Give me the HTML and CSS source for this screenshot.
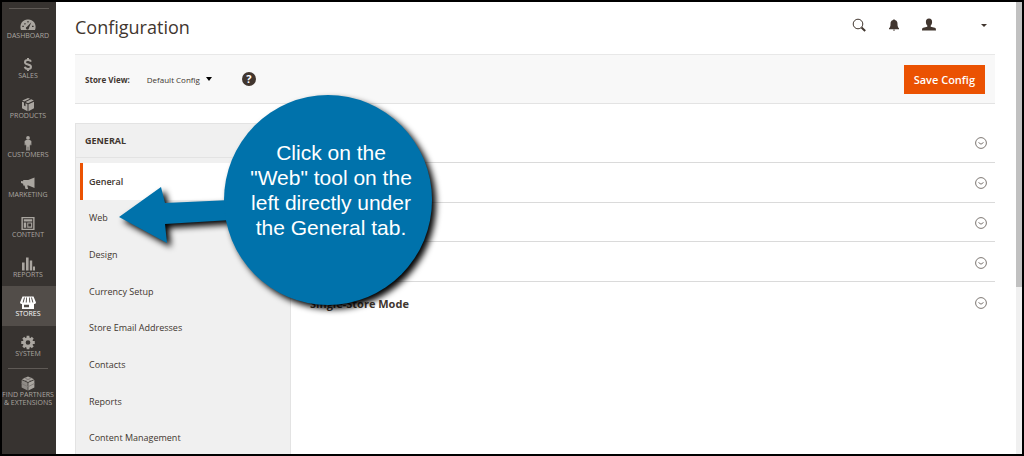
FILE: index.html
```html
<!DOCTYPE html>
<html lang="en">
<head>
    <meta charset="UTF-8">
    <meta name="viewport" content="width=device-width, initial-scale=1.0">
    <title>Configuration</title>
    <link rel="stylesheet" href="styles.css">
</head>
<body>
    <div class="page">
        <nav class="menu">
            <div class="menu-list">
                <a href="#">
                    <svg viewBox="0 0 16 14"><path fill-rule="evenodd" d="M1 12.500A7 7.500 0 0 1 8 2a7 7.500 0 0 1 7 10.500zM2.300 9.500h1.500v-1.200H2.300zM4 6.500l1 .8.900-1-1-.8zM7.400 3.400v1.500h1.200V3.400zM12 9.500h1.600V8.300H12zM11.300 4.800L7 9.200a1.500 1.500 0 1 0 1.900 1.200z"/></svg>
                    <span>DASHBOARD</span>
                </a>
                <a href="#">
                    <svg viewBox="0 0 16 14"><path class="line" d="M11 4.200C10.500 2.900 9.500 2.500 8 2.500c-2 0-3 .9-3 2.200C5 7.600 11 6.300 11 9.300c0 1.400-1.200 2.200-3 2.200s-2.900-.8-3.200-2.200M8 .5v2M8 11.500v2"/></svg>
                    <span>SALES</span>
                </a>
                <a href="#">
                    <svg viewBox="0 0 16 14"><path d="M8 .5l2 .8-5.800 2.600-2-.8zM11.200 1.800l2.600 1.300L8 5.800 5.500 4.600zM2 4.200l2 .9v3l1.500.7V5.800l2 1v6.900L2 10.800zM14 4.200v6.600l-5.500 2.900V6.800z"/></svg>
                    <span>PRODUCTS</span>
                </a>
                <a href="#">
                    <svg viewBox="0 0 16 16"><circle cx="8" cy="2" r="2"/><path d="M6 4.300h4l1.600 1v4.500h-1.200V7.500l-.5 3v5H8.300v-4h-.6v4H6.100v-5l-.5-3v2.300H4.400V5.300z"/></svg>
                    <span>CUSTOMERS</span>
                </a>
                <a href="#">
                    <svg viewBox="0 0 16 14"><path d="M14.500 1v10.500L8.500 9H7.200l1 3.500H5.600L4.500 9H3.200V7.200L1 6.500v-2l2.200.3V3.500h5z"/></svg>
                    <span>MARKETING</span>
                </a>
                <a href="#">
                    <svg viewBox="0 0 16 16"><path fill-rule="evenodd" d="M1 1h14v14H1zM2.500 2.500v11h11v-11zM3.500 3.500h9v2.300h-9zM3.500 6.800h2.600v5.700H3.500zM7.200 6.800h5.300v5.700H7.200zM8.300 8v3.300h3V8z"/></svg>
                    <span>CONTENT</span>
                </a>
                <a href="#">
                    <svg viewBox="0 0 16 14"><path d="M2 6h2.600v8H2zM6 1h2.600v13H6zM9.800 4h2.400v10H9.800zM13 10h2v4h-2z"/></svg>
                    <span>REPORTS</span>
                </a>
                <a href="#" class="active">
                    <svg viewBox="0 0 16 14"><path fill-rule="evenodd" d="M2.500 1h11L16 7a1.900 1.900 0 0 1-2 1.600V13.500H2V8.600A1.900 1.900 0 0 1 0 7zM4 2L2.600 7h1L5 2zM6.200 2l-.5 5h1L7 2zM9 2l.3 5h1L9.800 2zM11 2l1.400 5h1L12 2zM4 9.200v2.600h5V9.200z"/></svg>
                    <span>STORES</span>
                </a>
                <a href="#">
                    <svg viewBox="0 0 16 16"><circle class="gear" cx="8" cy="8" r="4"/><path class="teeth" d="M8 .8v3M8 12.200v3M.8 8h3M12.200 8h3M2.900 2.900L5 5M11 11l2.100 2.100M2.900 13.100L5 11M11 5l2.100-2.100"/></svg>
                    <span>SYSTEM</span>
                </a>
            </div>
            <a href="#" class="partners">
                <svg viewBox="0 0 16 16"><path d="M8 .5l6.500 3L8 6.500l-6.500-3z"/><path class="shade" d="M1.200 4.200l6.400 3v8.300l-6.400-3.300z"/><path d="M14.800 4.200l-6.400 3v8.300l6.400-3.300z"/><path class="seam" d="M4.500 2l7 3.200M11.500 2l-7 3.200M1.200 8l6.800 3.500L14.800 8"/></svg>
                <span>FIND PARTNERS<br>&amp; EXTENSIONS</span>
            </a>
        </nav>

        <main class="content">
            <header class="header">
                <h1>Configuration</h1>
                <div class="header-tools">
                    <button aria-label="Search"><svg viewBox="0 0 14 14"><circle class="stroke" cx="6" cy="6" r="4.800"/><path class="stroke thick" d="M9.500 9.500l3.700 3.500"/></svg></button>
                    <button aria-label="Notifications"><svg viewBox="0 0 14 14"><path d="M6.200 2a.8.8 0 0 1 1.600 0C10 2.500 10.500 4 10.500 6c0 2.500.6 3.600 1.500 4.200v1H2v-1c.9-.6 1.500-1.700 1.500-4.200 0-2 .5-3.500 2.700-4zM5.800 11.800h2.400L7 13z"/></svg></button>
                    <button aria-label="Account"><svg viewBox="0 0 14 14"><path d="M7 .5c2.200 0 3.100 1.500 3.100 3.400S9.300 6.800 8.700 7.500v1.200l4.100 1c.9.300 1.200 1 1.200 2.800H0c0-1.800.3-2.500 1.200-2.800l4.100-1V7.500C4.700 6.800 3.900 5.700 3.900 3.900S4.800.5 7 .5z"/></svg></button>
                    <button aria-label="Account menu" class="caret"></button>
                </div>
            </header>

            <div class="toolbar">
                <span class="store-label">Store View:</span>
                <button class="store-switch">Default Config <i class="arrow"></i></button>
                <button class="help" aria-label="Help">?</button>
                <button class="save">Save Config</button>
            </div>

            <div class="columns">
                <aside class="side">
                    <h2>GENERAL</h2>
                    <div class="side-list">
                        <a href="#" class="current">General</a>
                        <a href="#">Web</a>
                        <a href="#">Design</a>
                        <a href="#">Currency Setup</a>
                        <a href="#">Store Email Addresses</a>
                        <a href="#">Contacts</a>
                        <a href="#">Reports</a>
                        <a href="#">Content Management</a>
                    </div>
                </aside>
                <div class="sections">
                    <button class="section" aria-label="Expand"><svg viewBox="0 0 12 12"><circle cx="6" cy="6" r="5.400"/><path d="M3.500 5.500L6 7.200l2.500-1.700"/></svg></button>
                    <button class="section" aria-label="Expand"><svg viewBox="0 0 12 12"><circle cx="6" cy="6" r="5.400"/><path d="M3.500 5.500L6 7.200l2.500-1.700"/></svg></button>
                    <button class="section" aria-label="Expand"><svg viewBox="0 0 12 12"><circle cx="6" cy="6" r="5.400"/><path d="M3.500 5.500L6 7.200l2.500-1.700"/></svg></button>
                    <button class="section" aria-label="Expand"><svg viewBox="0 0 12 12"><circle cx="6" cy="6" r="5.400"/><path d="M3.500 5.500L6 7.200l2.500-1.700"/></svg></button>
                    <button class="section">Single-Store Mode<svg viewBox="0 0 12 12"><circle cx="6" cy="6" r="5.400"/><path d="M3.500 5.500L6 7.200l2.500-1.700"/></svg></button>
                </div>

                <div class="callout">
                    <svg viewBox="0 0 320 216"><path d="M2 122L44 92l4 16 66-3v20l-66 4 2 19z"/><ellipse cx="211" cy="105" rx="104" ry="105"/></svg>
                    <p>Click on the<br>"Web" tool on the<br>left directly under<br>the General tab.</p>
                </div>
            </div>
        </main>

        <div class="scrollbar"><div class="thumb"></div></div>
    </div>
</body>
</html>
```
FILE: styles.css
```css
* {
    box-sizing: border-box;
}
body {
    margin: 0;
    font-family: "Open Sans", sans-serif;
    color: #41362f;
}
button {
    padding: 0;
    border: none;
    background: none;
    font-family: inherit;
    color: inherit;
    cursor: pointer;
}
a {
    color: inherit;
    text-decoration: none;
}
.page {
    display: flex;
    height: 100vh;
    overflow: hidden;
    border: 2px solid #000;
    background: #fff;
}

/* left menu */
.menu {
    flex: 0 0 54px;
    padding-top: 6px;
    background: #373330;
    color: #aaa6a0;
    font-size: 7px;
    line-height: 8px;
    text-align: center;
}
.menu-list {
    display: grid;
    grid-auto-rows: 1fr;
    height: 358px;
}
.menu-list::before {
    content: "";
    position: absolute;
    width: 40px;
    margin-left: 7px;
    border-top: 1px solid #5f5a56;
}
.menu a {
    display: flex;
    flex-direction: column;
    align-items: center;
    padding: 9px 2px 0 0;
    white-space: nowrap;
}
.menu svg {
    width: 16px;
    height: 15px;
    fill: #aaa6a0;
}
.menu .active {
    background: #524d49;
    color: #fff;
}
.menu .active svg {
    fill: #fff;
}
.menu .line {
    fill: none;
    stroke: #aaa6a0;
    stroke-width: 2;
}
.menu .gear {
    fill: none;
    stroke: #aaa6a0;
    stroke-width: 3;
}
.menu .teeth {
    stroke: #aaa6a0;
    stroke-width: 3;
}
.menu .shade {
    fill: #8f8b86;
}
.menu .seam {
    fill: none;
    stroke: #7f7a76;
    stroke-width: 1;
}
.menu .partners::before {
    content: "";
    width: 40px;
    margin-bottom: 7px;
    border-top: 1px solid #5f5a56;
}
.menu .partners {
    padding-top: 2px;
}

/* main area */
.content {
    flex: 1;
    min-width: 0;
    padding: 0 21px 0 19px;
}
.header {
    display: flex;
    align-items: center;
    justify-content: space-between;
    height: 52px;
}
h1 {
    margin: 0;
    padding-bottom: 2px;
    font-size: 18px;
    font-weight: 400;
    line-height: 26px;
}
.header-tools {
    display: flex;
    align-items: center;
    gap: 21px;
    margin-right: 8px;
    padding-bottom: 6px;
}
.header-tools svg {
    display: block;
    width: 14px;
    height: 14px;
    fill: #41362f;
}
.header-tools .stroke {
    fill: none;
    stroke: #41362f;
    stroke-width: 1;
}
.header-tools .thick {
    stroke-width: 2;
}
.caret {
    margin-left: 24px;
    border: 3px solid transparent;
    border-top-color: #41362f;
    border-bottom: none;
}
.toolbar {
    display: flex;
    align-items: center;
    height: 50px;
    padding: 0 10px;
    border-top: 1px solid #e8e8e8;
    border-bottom: 1px solid #e3e3e3;
    background: #f8f8f8;
}
.store-label {
    margin-right: 17px;
    font-size: 8px;
    font-weight: 700;
}
.store-switch {
    display: flex;
    align-items: center;
    gap: 6px;
    font-size: 8px;
}
.arrow {
    border: 3px solid transparent;
    border-top: 4px solid #000;
    border-bottom: none;
}
.help {
    width: 14px;
    height: 14px;
    margin-left: 30px;
    border-radius: 50%;
    background: #41362f;
    color: #fff;
    font-size: 11px;
    font-weight: 700;
    line-height: 14px;
}
.save {
    height: 29px;
    margin-left: auto;
    padding: 0 10px;
    background: #eb5202;
    color: #fff;
    font-size: 11px;
    font-weight: 600;
}
.columns {
    position: relative;
    display: flex;
    margin-top: 19px;
}
.side {
    flex: 0 0 216px;
    height: 400px;
    border: 1px solid #e3e3e3;
    background: #f0f0f0;
}
.side h2 {
    margin: 0 0 5px;
    padding-left: 9px;
    border-bottom: 1px solid #e3e3e3;
    font-size: 9px;
    line-height: 33px;
}
.side-list {
    display: grid;
    grid-auto-rows: 1fr;
    height: 293px;
}
.side-list a {
    display: flex;
    align-items: center;
    margin-left: 4px;
    padding-left: 6px;
    border-left: 3px solid transparent;
    font-size: 9px;
}
.side-list .current {
    border-left-color: #eb5202;
    background: #fff;
    font-weight: 600;
}
.sections {
    flex: 1;
    display: grid;
    grid-auto-rows: 1fr;
    height: 199px;
}
.section {
    display: flex;
    align-items: center;
    padding: 2px 8px 0 19px;
    border-bottom: 1px solid #dadada;
    font-size: 11px;
    font-weight: 700;
}
.section:last-child {
    border-bottom: none;
}
.section svg {
    width: 12px;
    height: 12px;
    margin-left: auto;
    fill: none;
    stroke: #7d7772;
    stroke-width: 1;
}

/* callout over the page */
.callout {
    position: absolute;
    top: -28px;
    left: 42px;
    width: 320px;
}
.callout svg {
    display: block;
    fill: #0072ab;
    overflow: visible;
    filter: drop-shadow(4px 4px 3px #000);
}
.callout p {
    position: absolute;
    top: 45px;
    left: 110px;
    width: 208px;
    margin: 0;
    color: #fff;
    font-family: "Liberation Sans", Arial, sans-serif;
    font-size: 21px;
    line-height: 25px;
    text-align: center;
}

.scrollbar {
    flex: 0 0 6px;
    background: #f0f0f0;
}
.thumb {
    height: 63%;
    background: #c1c1c1;
}
```
